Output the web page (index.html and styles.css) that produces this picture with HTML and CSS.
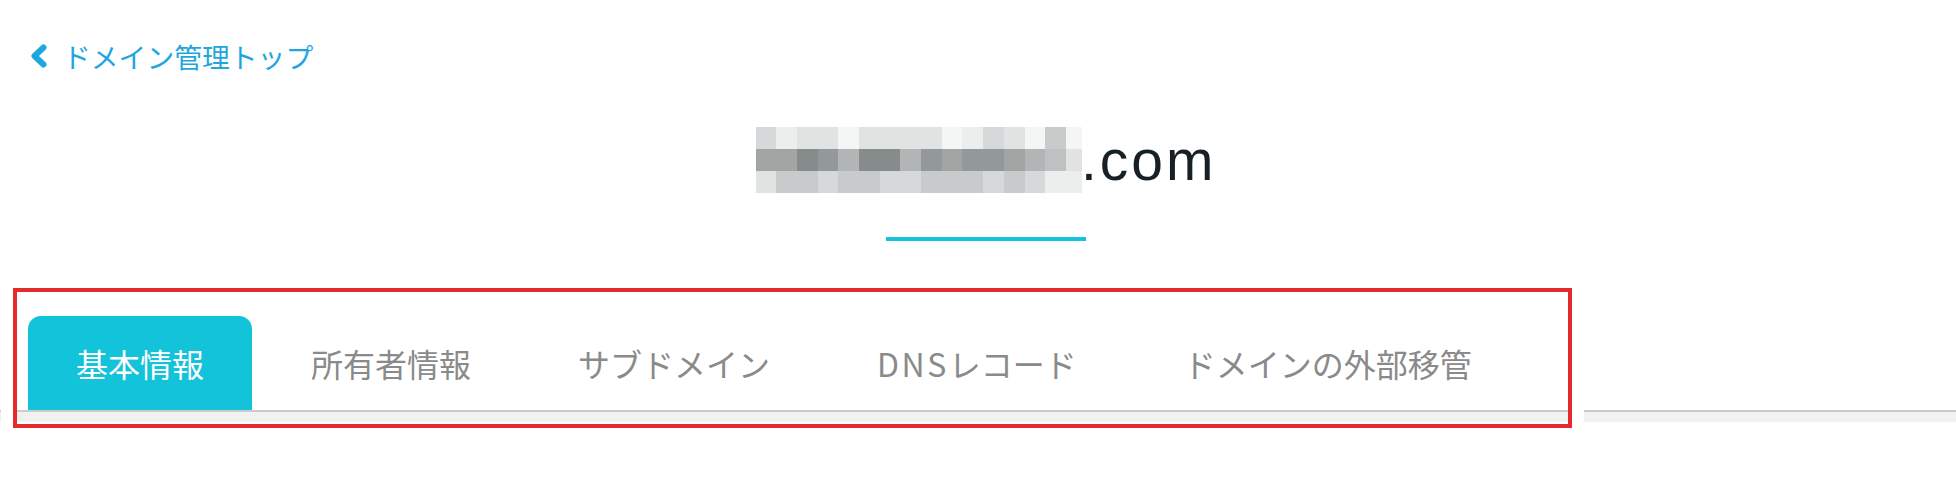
FILE: index.html
```html
<!DOCTYPE html>
<html lang="ja">
<head>
<meta charset="utf-8">
<title>ドメイン詳細</title>
<link rel="stylesheet" href="styles.css">
</head>
<body>
<div class="page">
  <a class="back" href="#">
    <svg class="chev" width="18" height="24" viewBox="0 0 18 24" aria-hidden="true"><polyline points="13.5,3.5 4.5,12 13.5,20.5" fill="none" stroke="#1fa6df" stroke-width="6" stroke-linecap="round" stroke-linejoin="round"/></svg>
    <span>ドメイン管理トップ</span>
  </a>

  <div class="head">
    <div class="domain">
      <div class="blur">
        <span class="p3"></span><span class="p1"></span><span class="p2"></span><span class="p2"></span><span class="p0"></span><span class="p2"></span><span class="p2"></span><span class="p2"></span><span class="p2"></span><span class="p0"></span><span class="p1"></span><span class="p3"></span><span class="p2"></span><span class="p0"></span><span class="p4"></span><span class="p0"></span>
        <span class="p6"></span><span class="p6"></span><span class="p8"></span><span class="p7"></span><span class="p5"></span><span class="p8"></span><span class="p8"></span><span class="p5"></span><span class="p7"></span><span class="p6"></span><span class="p7"></span><span class="p7"></span><span class="p6"></span><span class="p5"></span><span class="p9"></span><span class="p2"></span>
        <span class="p2"></span><span class="p4"></span><span class="p4"></span><span class="p3"></span><span class="p4"></span><span class="p4"></span><span class="p3"></span><span class="p3"></span><span class="p4"></span><span class="p4"></span><span class="p4"></span><span class="p3"></span><span class="p4"></span><span class="p3"></span><span class="p1"></span><span class="p1"></span>
      </div>
      <span class="tld">.com</span>
    </div>
    <div class="rule"></div>
  </div>

  <div class="tabbar">
    <nav class="tabs">
      <a class="tab active" href="#">基本情報</a>
      <a class="tab" href="#">所有者情報</a>
      <a class="tab" href="#">サブドメイン</a>
      <a class="tab" href="#"><span class="latin">DNS</span>レコード</a>
      <a class="tab" href="#">ドメインの外部移管</a>
    </nav>
    <div class="strip"></div>
  </div>

  <div class="mark"></div>
</div>
</body>
</html>
```

FILE: styles.css
```css
html, body {
  margin: 0;
  padding: 0;
  background: #ffffff;
}

body {
  font-family: "Noto Sans CJK JP", "Noto Sans", sans-serif;
  width: 1956px;
  height: 484px;
  overflow: hidden;
}

.page {
  position: relative;
  height: 484px;
}

.back {
  display: flex;
  align-items: center;
  gap: 15px;
  padding: 36px 0 0 30px;
  height: 40px;
  color: #1fa6df;
  text-decoration: none;
  font-size: 27.8px;
  line-height: 40px;
  width: max-content;
}

.chev {
  display: block;
}

.head {
  display: flex;
  flex-direction: column;
  align-items: center;
  margin-top: 51px;
  padding-left: 16px;
}

.domain {
  display: flex;
  align-items: flex-end;
}

.blur {
  display: grid;
  grid-template-columns: repeat(15, 20.7px) 16px;
  grid-template-rows: repeat(3, 22px);
}

.p0 { background: #f4f5f5; }
.p1 { background: #eceeee; }
.p2 { background: #e1e3e3; }
.p3 { background: #d6d9da; }
.p4 { background: #c8cbcc; }
.p5 { background: #b2b5b5; }
.p6 { background: #a1a6a5; }
.p7 { background: #93989a; }
.p8 { background: #868b8b; }
.p9 { background: #bdc1c1; }

.tld {
  font-family: "Liberation Sans", Arial, sans-serif;
  font-size: 57px;
  line-height: 1;
  color: #172024;
  margin-left: -1px;
  margin-bottom: 4px;
  letter-spacing: 3px;
}

.rule {
  width: 200px;
  height: 4px;
  margin-top: 44px;
  background: #14c2dc;
}

.tabbar {
  margin-top: 75px;
}

.tabs {
  display: flex;
  gap: 11px;
  padding-left: 28px;
  border-bottom: 2px solid #cbcbcb;
}

.tab {
  display: block;
  height: 94px;
  line-height: 94px;
  padding: 0 48px;
  font-size: 32px;
  color: #8a8a8a;
  text-decoration: none;
  border-radius: 13px 13px 0 0;
}

.tab .latin {
  letter-spacing: 2.5px;
}

.tab.active {
  background: #13c3da;
  color: #ffffff;
}

.strip {
  height: 10px;
  background: #f1f1f1;
}

.mark {
  position: absolute;
  left: 13px;
  top: 288px;
  width: 1551px;
  height: 132px;
  border: 4px solid #e52a2e;
  box-shadow: 0 0 0 12px #ffffff;
}
```
